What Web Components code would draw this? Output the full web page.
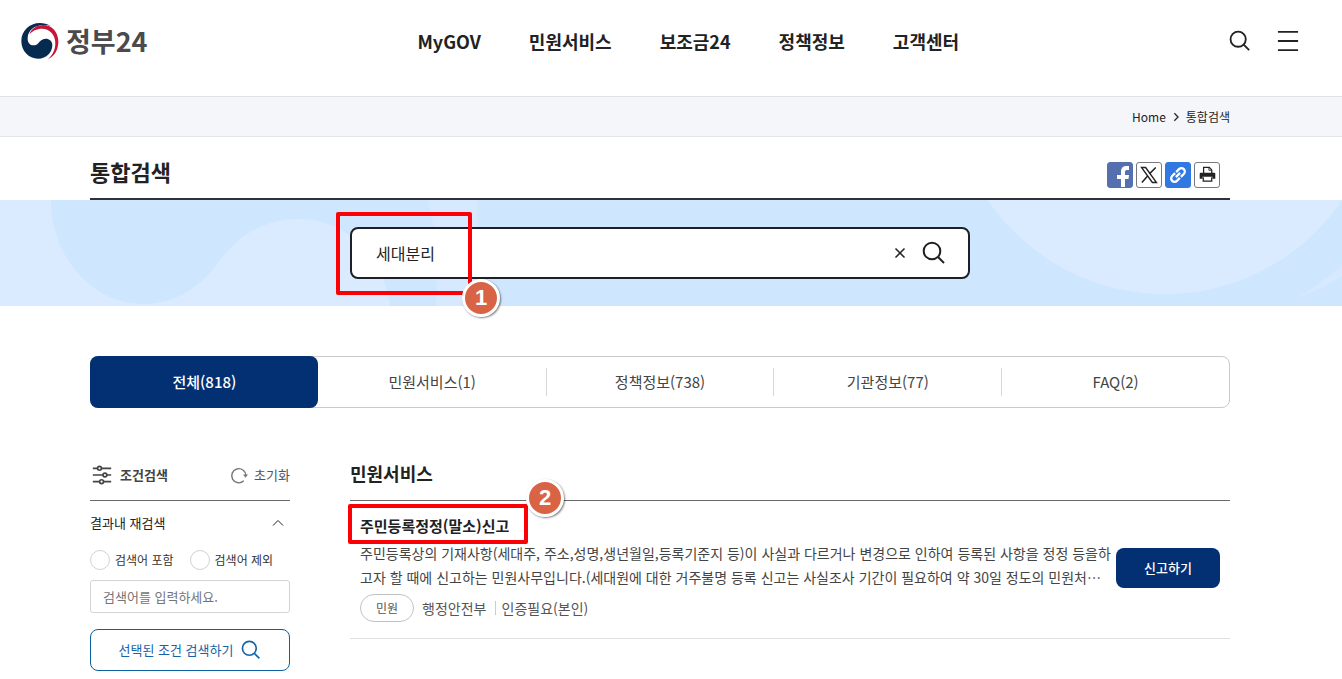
<!DOCTYPE html>
<html lang="ko">
<head>
<meta charset="UTF-8">
<meta name="viewport" content="width=device-width, initial-scale=1">
<title>통합검색 | 정부24</title>
<style>
    body {
        margin: 0;
        background: #fff;
        color: #222;
        font: 14px/24px "Noto Sans CJK KR", "Noto Sans", sans-serif;
    }
</style>
</head>
<body>
<gov-page></gov-page>

<script>
const BASE = `
    *, *::before { box-sizing: border-box; }
    a { color: inherit; text-decoration: none; }
    h1, h2, h3, p { margin: 0; }
    button, input { font: inherit; color: inherit; }
    button { padding: 0; border: 0; background: none; cursor: pointer; }
    svg { display: block; flex: none; }
`;

class GovElement extends HTMLElement {
    constructor() {
        super();
        this.attachShadow({ mode: "open" });
    }

    connectedCallback() {
        const template = document.createElement("template");
        template.innerHTML = `<style>${BASE}${this.getStyles()}</style>${this.getTemplate()}`;
        this.shadowRoot.replaceChildren(template.content.cloneNode(true));
    }
}

// Icons
const ICONS = {
    search: `<circle cx="10" cy="10" r="8.3"/><path d="M16 16l6 6"/>`,
    menu: `<path d="M1 2h22M1 12h22M1 22h22"/>`,
    close: `<path d="M3 3l18 18M21 3L3 21"/>`,
    up: `<path d="M2 17L12 7l10 10"/>`,
    right: `<path d="M8 3l9 9-9 9"/>`,
    filter: `<path d="M1 4h6M12 4h11M1 12h12M18 12h5M1 20h8M14 20h9"/><circle cx="9" cy="4" r="2.3"/><circle cx="15.500" cy="12" r="2.3"/><circle cx="11.500" cy="20" r="2.3"/>`,
    reset: `<path d="M18 19.500A10 10 0 1 1 21 12"/><path d="M17 10.500h7l-3.500 4.500z" fill="currentColor" stroke="none"/>`,
    link: `<g transform="rotate(-45 12 12)"><path d="M11 16.500H5.500a4.500 4.500 0 0 1 0-9H11M13 7.500h5.500a4.500 4.500 0 0 1 0 9H13M8 12h8"/></g>`,
    x: `<path d="M2 2h5.500L22 22h-5.500z" stroke-width="1.8"/><path d="M21 2l-8.500 8.500M10.500 13L2.500 22"/>`,
    print: `<path d="M6.500 10V2h8l3.500 3.500V10" stroke-width="1.8"/><path d="M14 2v4h4" stroke-width="1.2"/><path d="M2.500 9.500h19a1.500 1.500 0 0 1 1.500 1.500v7h-4v-3H5v3H1v-7a1.500 1.500 0 0 1 1.500-1.500z" fill="currentColor" stroke="none"/><path d="M6 16v5.500h12V16" stroke-width="1.800"/>`
};

class GovIcon extends GovElement {
    getStyles() {
        return `
            :host { display: block; flex: none; }
            svg { fill: none; stroke: currentColor; overflow: visible; }
        `;
    }

    getTemplate() {
        const size = this.getAttribute("size") || 24;
        const stroke = this.getAttribute("stroke") || 2;
        return `<svg width="${size}" height="${size}" viewBox="0 0 24 24" stroke-width="${stroke}" aria-hidden="true">${ICONS[this.getAttribute("name")]}</svg>`;
    }
}
customElements.define("gov-icon", GovIcon);

// Red frame with a numbered badge
class StepMark extends GovElement {
    getStyles() {
        return `
            :host {
                position: absolute;
                z-index: 2;
                box-sizing: border-box;
                border: 4px solid #fb0005;
                border-radius: 2px;
                pointer-events: none;
            }
            span {
                position: absolute;
                right: var(--badge-right);
                top: var(--badge-top);
                width: 38px;
                height: 38px;
                border: 3px solid #fff;
                border-radius: 50%;
                background: #d96345;
                box-shadow: 1px 1px 2px rgba(0, 0, 0, .5);
                color: #fff;
                font: bold 22px/32px "Liberation Sans", sans-serif;
                text-align: center;
            }
        `;
    }

    getTemplate() {
        return `<span>${this.getAttribute("number")}</span>`;
    }
}
customElements.define("step-mark", StepMark);

class GovHeader extends GovElement {
    getStyles() {
        return `
            :host { display: block; }
            header {
                display: flex;
                align-items: center;
                justify-content: space-between;
                height: 97px;
                padding: 0 43px 15px 21px;
                border-bottom: 1px solid #dfe2e8;
            }
            .logo {
                display: flex;
                align-items: center;
                gap: 7px;
                color: #4b4b4d;
                font-size: 27px;
                font-weight: 700;
                line-height: 38px;
            }
            nav { display: flex; gap: 48px; font-size: 18px; font-weight: 700; }
            .tools { display: flex; align-items: center; gap: 26px; }
        `;
    }

    getTemplate() {
        const menu = ["MyGOV", "민원서비스", "보조금24", "정책정보", "고객센터"];
        return `
            <header>
                <a class="logo" href="#">
                    <svg width="38" height="36" viewBox="0 0 112 108" aria-hidden="true">
                        <path fill="#052c50" d="M90 10C78 2 66 0 56 0C24 0 0 24 0 54C0 84 22 107 50 107C76 107 93 88 93 66C93 54 84 47 73 47C62 47 56 54 52 59C48 65 43 67 36 67C26 67 18 58 19 44C20 22 40 8 62 6C72 5 82 6 90 10Z"/>
                        <path fill="#c8143a" d="M24 34C30 16 48 6 66 6C92 6 111 28 111 56C111 82 98 100 80 108C94 96 102 80 102 60C102 34 84 17 62 17C46 17 32 24 24 34Z"/>
                    </svg>
                    <span>정부24</span>
                </a>
                <nav>${menu.map(item => `<a href="#">${item}</a>`).join("")}</nav>
                <div class="tools">
                    <button aria-label="검색"><gov-icon name="search" size="22" stroke="2"></gov-icon></button>
                    <button aria-label="전체메뉴"><gov-icon name="menu" size="22" stroke="2"></gov-icon></button>
                </div>
            </header>
        `;
    }
}
customElements.define("gov-header", GovHeader);

class GovBreadcrumb extends GovElement {
    getStyles() {
        return `
            :host { display: block; background: #f5f6fa; border-bottom: 1px solid #e4e6ea; }
            nav {
                display: flex;
                align-items: center;
                justify-content: flex-end;
                gap: 5px;
                max-width: 1140px;
                height: 39px;
                margin: 0 auto;
                font-size: 12px;
            }
        `;
    }

    getTemplate() {
        return `
            <nav>
                <a href="#">Home</a>
                <gov-icon name="right" size="10" stroke="3"></gov-icon>
                <a href="#">통합검색</a>
            </nav>
        `;
    }
}
customElements.define("gov-breadcrumb", GovBreadcrumb);

class GovTitle extends GovElement {
    getStyles() {
        return `
            :host {
                display: flex;
                align-items: center;
                justify-content: space-between;
                box-sizing: border-box;
                max-width: 1140px;
                height: 63px;
                margin: 0 auto;
                padding: 14px 10px 0 0;
                border-bottom: 2px solid #2f3238;
            }
            h1 { font-size: 22px; line-height: 32px; padding-bottom: 7px; }
            .share { display: flex; gap: 3px; }
            .share button {
                display: flex;
                align-items: center;
                justify-content: center;
                width: 26px;
                height: 26px;
                border: 1px solid #77797c;
                border-radius: 3px;
                overflow: hidden;
            }
            .share .facebook { background: #5470ae; border-color: #5470ae; }
            .share .link { background: #3078e2; border-color: #3078e2; color: #fff; }
        `;
    }

    getTemplate() {
        return `
            <h1><slot></slot></h1>
            <div class="share">
                <button class="facebook" aria-label="페이스북">
                    <svg width="26" height="26" viewBox="0 0 26 26" aria-hidden="true"><path fill="#fff" d="M14 26v-9h-4v-4h4v-3c0-4 2-6 5.500-6H22v4h-2c-1.500 0-2 .700-2 2v3h4l-.500 4H18v9z"/></svg>
                </button>
                <button aria-label="X"><gov-icon name="x" size="18"></gov-icon></button>
                <button class="link" aria-label="링크 복사"><gov-icon name="link" size="18" stroke="3"></gov-icon></button>
                <button aria-label="인쇄"><gov-icon name="print" size="17"></gov-icon></button>
            </div>
        `;
    }
}
customElements.define("gov-title", GovTitle);

class GovSearch extends GovElement {
    getStyles() {
        return `
            :host { display: grid; height: 106px; background: #cfe6ff; }
            svg.wave { grid-area: 1 / 1; width: 100%; height: 106px; }
            .center {
                grid-area: 1 / 1;
                display: flex;
                justify-content: center;
                align-items: center;
                padding-right: 22px;
            }
            form {
                position: relative;
                display: flex;
                align-items: center;
                gap: 16px;
                width: 620px;
                height: 52px;
                padding: 0 22px 0 24px;
                border: 2px solid #1d2127;
                border-radius: 8px;
                background: #fff;
            }
            input { flex: 1; min-width: 0; height: 40px; padding: 0; border: 0; outline: 0; background: none; font-size: 16px; }
            step-mark {
                left: -16px;
                top: -17px;
                width: 136px;
                height: 83px;
                --badge-right: -32px;
                --badge-top: 63px;
            }
        `;
    }

    getTemplate() {
        return `
            <svg class="wave" viewBox="0 0 1342 106" preserveAspectRatio="xMidYMin slice" aria-hidden="true">
                <g fill="#dbebff">
                    <path d="M0 0H51C51 60 95 104 143 104C180 104 205 82 221 59C240 32 270 19 298 19C350 19 384 60 390 106H0Z"/>
                    <path fill="#d7e9ff" d="M428 0H477Q479 60 468 106H436Q440 45 428 0Z"/>
                    <circle cx="1165" cy="-120" r="214"/>
                    <path fill="#d7e9ff" d="M1342 65Q1320 85 1295 99Q1325 88 1342 76Z"/>
                </g>
            </svg>
            <div class="center">
                <form>
                    <input type="text" value="세대분리" aria-label="검색어">
                    <button type="reset" aria-label="지우기"><gov-icon name="close" size="12" stroke="3"></gov-icon></button>
                    <button type="button" aria-label="검색"><gov-icon name="search" size="24" stroke="2"></gov-icon></button>
                    <step-mark number="1"></step-mark>
                </form>
            </div>
        `;
    }
}
customElements.define("gov-search", GovSearch);

class GovTabs extends GovElement {
    getStyles() {
        return `
            :host { display: block; }
            nav {
                display: flex;
                height: 52px;
                border: 1px solid #c8cacc;
                border-radius: 8px;
                color: #444;
                font-size: 15px;
            }
            a { flex: 1; display: flex; align-items: center; }
            span { flex: 1; border-left: 1px solid #d5d7d9; line-height: 28px; text-align: center; }
            .on { margin: -1px 0 -1px -1px; border-radius: 8px; background: #032f73; color: #fff; font-weight: 500; }
            .on span, .on + a span { border-color: transparent; }
        `;
    }

    getTemplate() {
        const tabs = ["전체(818)", "민원서비스(1)", "정책정보(738)", "기관정보(77)", "FAQ(2)"];
        return `<nav>${tabs.map((tab, i) => `<a href="#"${i ? "" : ` class="on"`}><span>${tab}</span></a>`).join("")}</nav>`;
    }
}
customElements.define("gov-tabs", GovTabs);

class GovFilter extends GovElement {
    getStyles() {
        return `
            :host { display: block; font-size: 13px; }
            .head {
                display: flex;
                align-items: center;
                justify-content: space-between;
                height: 51px;
                border-bottom: 1px solid #67696c;
            }
            h2 { display: flex; align-items: center; gap: 8px; padding-left: 2px; color: #444; font-size: 13px; }
            .reset { display: flex; align-items: center; gap: 6px; color: #555; }
            .reset gov-icon { color: #777; }
            .toggle { display: flex; align-items: center; justify-content: space-between; width: 100%; height: 44px; padding-right: 6px; }
            .radios { display: flex; gap: 16px; padding: 5px 0 10px; }
            label { display: flex; align-items: center; gap: 5px; height: 20px; font-size: 12px; color: #333; }
            input[type=radio] {
                appearance: none;
                width: 20px;
                height: 20px;
                margin: 0;
                border: 1px solid #d0d2d4;
                border-radius: 50%;
            }
            input[type=radio]:checked { border: 6px solid #032f73; }
            input[type=text] {
                display: block;
                width: 100%;
                height: 33px;
                padding: 0 12px;
                border: 1px solid #d2d4d6;
                border-radius: 3px;
            }
            input::placeholder { color: #757575; opacity: 1; }
            .submit {
                display: flex;
                align-items: center;
                justify-content: center;
                gap: 8px;
                width: 100%;
                height: 42px;
                margin-top: 16px;
                border: 1px solid #0b619f;
                border-radius: 8px;
                color: #1465a8;
            }
        `;
    }

    getTemplate() {
        return `
            <div class="head">
                <h2><gov-icon name="filter" size="20" stroke="2"></gov-icon>조건검색</h2>
                <button class="reset"><gov-icon name="reset" size="17"></gov-icon>초기화</button>
            </div>
            <button class="toggle" aria-expanded="true">결과내 재검색<gov-icon name="up" size="12"></gov-icon></button>
            <div class="radios">
                <label><input type="radio" name="scope" value="in">검색어 포함</label>
                <label><input type="radio" name="scope" value="out">검색어 제외</label>
            </div>
            <input type="text" placeholder="검색어를 입력하세요." aria-label="재검색어">
            <button class="submit">선택된 조건 검색하기<gov-icon name="search" size="20"></gov-icon></button>
        `;
    }
}
customElements.define("gov-filter", GovFilter);

class GovResult extends GovElement {
    getStyles() {
        return `
            :host {
                display: flex;
                align-items: center;
                gap: 3px;
                position: relative;
                padding: 13px 10px 16px;
                border-bottom: 1px solid #dfe0e2;
            }
            .body { flex: 1; min-width: 0; color: #444; }
            h3 { margin-bottom: 3px; color: #222; font-size: 15px; }
            p { word-break: break-all; }
            .meta { display: flex; align-items: center; gap: 8px; margin-top: 5px; color: #555; }
            .pill {
                padding: 0 15px;
                border: 1px solid #c0c2c4;
                border-radius: 14px;
                font-size: 12px;
                line-height: 26px;
            }
            .auth { padding-left: 6px; border-left: 1px solid #ccc; line-height: 14px; }
            button {
                width: 104px;
                height: 40px;
                border-radius: 8px;
                background: #032f73;
                color: #fff;
                font-size: 13px;
                font-weight: 500;
            }
            step-mark {
                left: -2px;
                top: 3px;
                width: 180px;
                height: 40px;
                --badge-right: -40px;
                --badge-top: -29px;
            }
        `;
    }

    getTemplate() {
        return `
            <div class="body">
                <h3><a href="#"><slot name="title"></slot></a></h3>
                <p><slot></slot></p>
                <div class="meta">
                    <span class="pill">민원</span>
                    <span><slot name="office"></slot></span>
                    <span class="auth"><slot name="auth"></slot></span>
                </div>
            </div>
            <button>신고하기</button>
            <step-mark number="2"></step-mark>
        `;
    }
}
customElements.define("gov-result", GovResult);

class GovPage extends GovElement {
    getStyles() {
        return `
            :host { display: block; }
            .wrap { padding-right: 22px; }
            gov-breadcrumb { padding-right: 22px; }
            main { max-width: 1140px; margin: 50px auto 0; }
            .columns { display: grid; grid-template-columns: 200px minmax(0, 1fr); gap: 60px; margin-top: 42px; }
            section > h2 {
                height: 51px;
                border-bottom: 1px solid #67696c;
                font-size: 18px;
                line-height: 46px;
            }
        `;
    }

    getTemplate() {
        return `
            <gov-header></gov-header>
            <gov-breadcrumb></gov-breadcrumb>
            <div class="wrap"><gov-title>통합검색</gov-title></div>
            <gov-search></gov-search>
            <div class="wrap">
                <main>
                    <gov-tabs></gov-tabs>
                    <div class="columns">
                        <gov-filter></gov-filter>
                        <section>
                            <h2>민원서비스</h2>
                            <gov-result>
                                <span slot="title">주민등록정정(말소)신고</span>
                                주민등록상의 기재사항(세대주, 주소,성명,생년월일,등록기준지 등)이 사실과 다르거나 변경으로 인하여 등록된 사항을 정정 등을하고자 할 때에 신고하는 민원사무입니다.(세대원에 대한 거주불명 등록 신고는 사실조사 기간이 필요하여 약 30일 정도의 민원처…
                                <span slot="office">행정안전부</span>
                                <span slot="auth">인증필요(본인)</span>
                            </gov-result>
                        </section>
                    </div>
                </main>
            </div>
        `;
    }
}
customElements.define("gov-page", GovPage);
</script>
</body>
</html>
